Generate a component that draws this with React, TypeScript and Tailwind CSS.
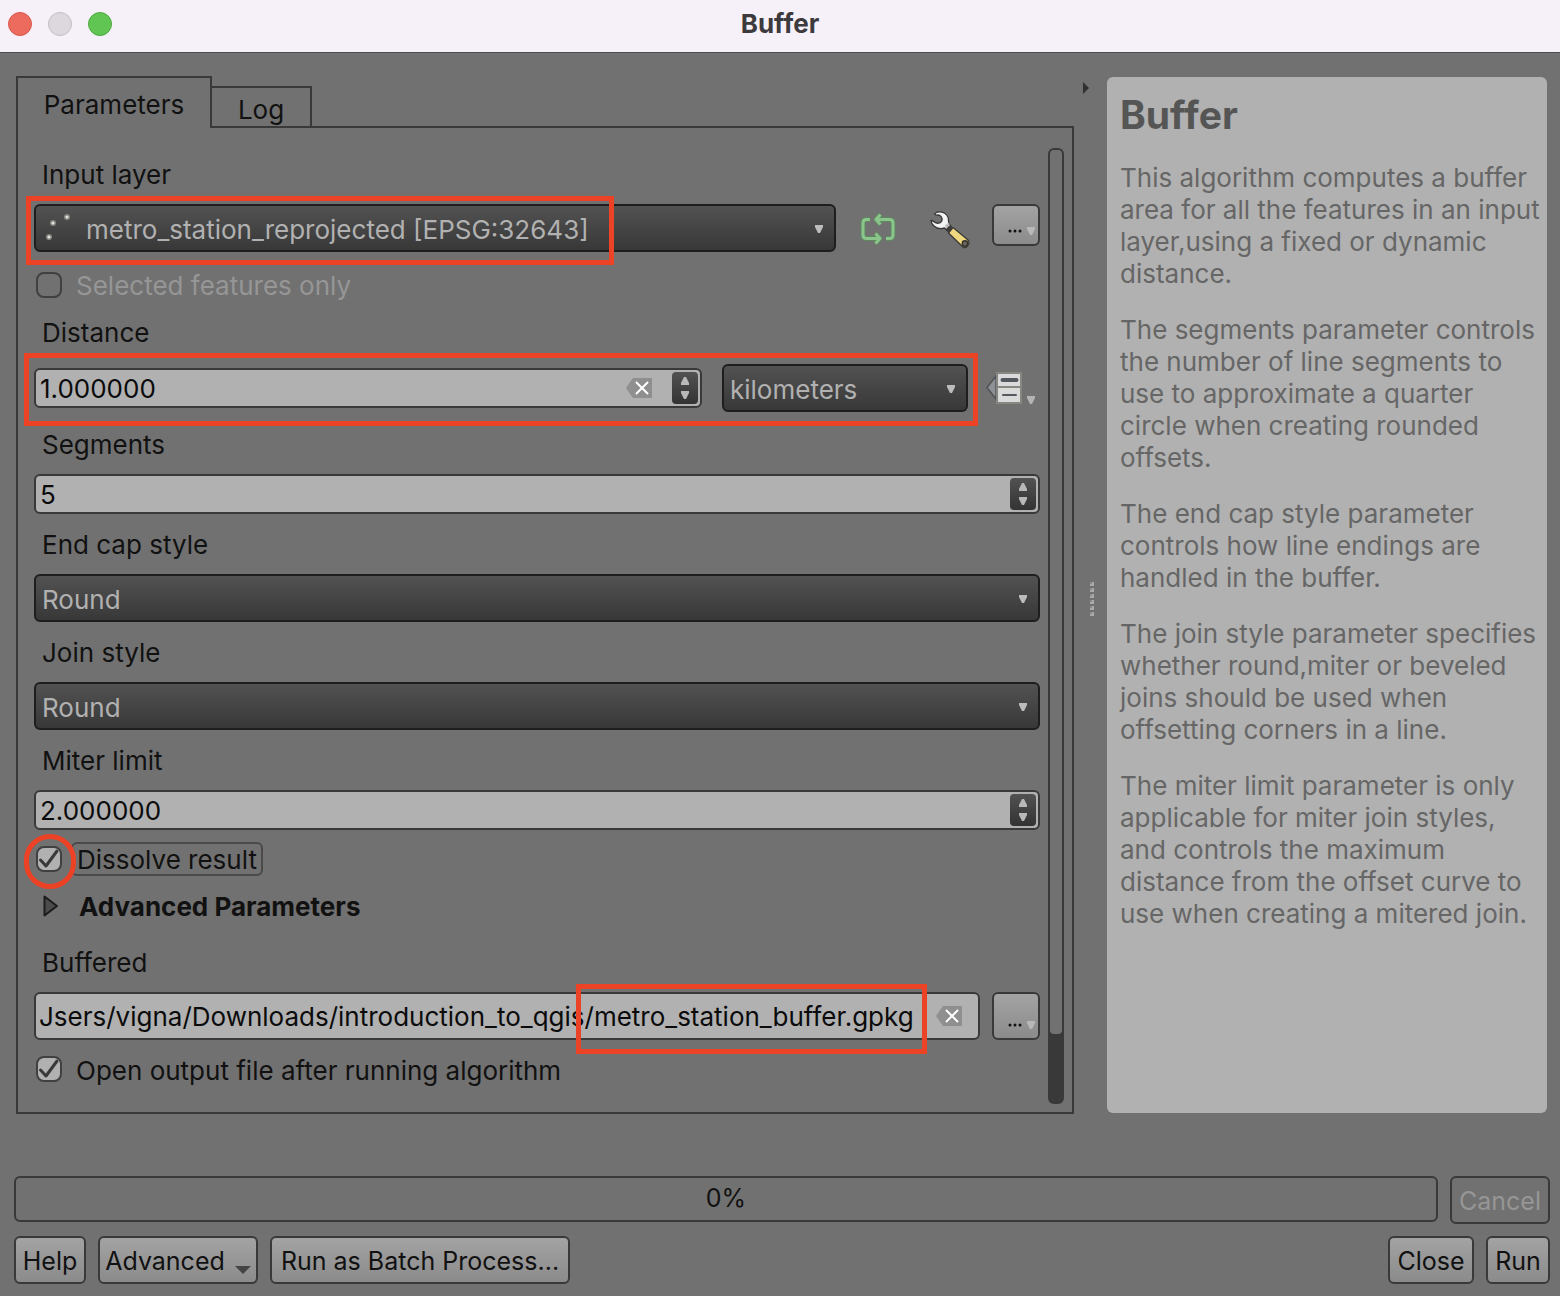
import React, { useState } from "react";

const DARK = "border-2 border-[#1e1e1e] bg-linear-to-b from-[#525252] to-[#383838] text-[#b1b1b1]";
const LIGHT = "border-2 border-[#393939] bg-linear-to-b from-[#a3a3a3] to-[#8b8b8b] text-[#111111]";

function Down({ className = "" }: { className?: string }) {
  return (
    <svg aria-hidden="true" viewBox="0 0 8 8" className={"h-2 w-2 " + className} fill="currentColor">
      <path d="M0 0h8v2L5 8H3L0 2z" />
    </svg>
  );
}

function Mark({ className }: { className: string }) {
  return <span aria-hidden="true" className={"pointer-events-none absolute z-10 border-5 border-[#ec4226] " + className} />;
}

function FieldLabel({ id, children, className = "mt-[15px]" }: { id: string; children: string; className?: string }) {
  return (
    <label htmlFor={id} className={"mb-[13px] block self-start pl-2 leading-8 " + className}>
      {children}
    </label>
  );
}

function Combo({ id, options, label, className = "" }: { id: string; options: string[]; label?: string; className?: string }) {
  return (
    <div className={"relative " + className}>
      <select id={id} aria-label={label} className={"h-12 w-full appearance-none rounded-md pt-0.5 pr-8 pl-1.5 " + DARK}>
        {options.map((o) => (
          <option key={o}>{o}</option>
        ))}
      </select>
      <Down className="pointer-events-none absolute top-[21px] right-[13px] text-[#bcbcbc]" />
    </div>
  );
}

function ClearButton({ onClick, label }: { onClick: () => void; label: string }) {
  return (
    <button type="button" aria-label={label} onClick={onClick} className="shrink-0">
      <svg viewBox="0 0 26 20" className="h-5 w-[26px]">
        <path d="M0 10 7 0h19v20H7z" fill="#8f8f8f" />
        <path d="m10 4 12 12M22 4 10 16" stroke="#fff" strokeWidth="2" />
      </svg>
    </button>
  );
}

function Spin({ id, initial, clear = false, className = "" }: { id: string; initial: string; clear?: boolean; className?: string }) {
  const [value, setValue] = useState(initial);
  const digits = (initial.split(".")[1] || "").length;
  const step = (d: number) => setValue((v) => ((parseFloat(v) || 0) + d).toFixed(digits));
  return (
    <div className={"flex h-10 items-center rounded-md border-2 border-[#393939] bg-[#b1b1b1] pr-0.5 " + className}>
      <input
        id={id}
        inputMode="decimal"
        value={value}
        onChange={(e) => setValue(e.target.value)}
        className="h-full min-w-0 flex-1 bg-transparent pl-1 leading-9 text-[#0b0b0b] outline-none"
      />
      {clear && <ClearButton label="Clear distance" onClick={() => setValue("")} />}
      <div className={"flex h-8 w-[26px] flex-col rounded bg-linear-to-b from-[#525252] to-[#333333] text-[#b8b8b8] " + (clear ? "ml-5" : "ml-2")}>
        <button type="button" aria-label="Increase" onClick={() => step(1)} className="flex flex-1 items-end justify-center pb-[3px]">
          <Down className="rotate-180" />
        </button>
        <button type="button" aria-label="Decrease" onClick={() => step(-1)} className="flex flex-1 items-start justify-center pt-[3px]">
          <Down />
        </button>
      </div>
    </div>
  );
}

function Check({ id, checked = false, disabled = false }: { id: string; checked?: boolean; disabled?: boolean }) {
  return (
    <span className="relative ml-0.5 flex h-[26px] w-[26px] shrink-0">
      <input
        id={id}
        type="checkbox"
        defaultChecked={checked}
        disabled={disabled}
        className="peer h-full w-full appearance-none rounded-lg border-2 border-[#404040] bg-[#b1b1b1] disabled:bg-transparent"
      />
      <svg aria-hidden="true" viewBox="0 0 26 26" className="pointer-events-none absolute inset-0 hidden peer-checked:block" fill="none">
        <path d="M4.500 14 10 20 21 5" stroke="#393939" strokeWidth="3" strokeLinecap="round" strokeLinejoin="round" />
      </svg>
    </span>
  );
}

function MoreButton({ label, className }: { label: string; className: string }) {
  return (
    <button type="button" aria-label={label} className={"relative w-12 shrink-0 rounded-md " + LIGHT + " " + className}>
      <svg aria-hidden="true" viewBox="0 0 14 4" className="absolute bottom-[11px] left-3.5 h-1 w-3.5" fill="#111">
        <circle cx="2" cy="2" r="1.500" />
        <circle cx="7" cy="2" r="1.500" />
        <circle cx="12" cy="2" r="1.500" />
      </svg>
      <Down className="absolute right-[3px] bottom-[9px] text-[#b8b8b8]" />
    </button>
  );
}

function SwapIcon() {
  return (
    <svg viewBox="0 0 36 34" className="h-[34px] w-9" fill="none" strokeLinejoin="round">
      <g stroke="#4f9a52" strokeOpacity="0.55" strokeWidth="5">
        <path d="M10 7.500H6.500Q3 7.500 3 11V23Q3 26.500 6.500 26.500H20M26 26.500H29.500Q33 26.500 33 23V11Q33 7.500 29.500 7.500H17" />
        <path d="M20.500 2.500 16 7.500 20.500 12.500M15.500 21.500l4.500 5-4.500 5" />
      </g>
      <g stroke="#8cc58c" strokeWidth="3">
        <path d="M10 7.500H6.500Q3 7.500 3 11V23Q3 26.500 6.500 26.500H20M26 26.500H29.500Q33 26.500 33 23V11Q33 7.500 29.500 7.500H17" />
        <path d="M20.500 2.500 16 7.500 20.500 12.500M15.500 21.500l4.500 5-4.500 5" />
      </g>
    </svg>
  );
}

function WrenchIcon() {
  return (
    <svg viewBox="0 0 40 38" className="h-[38px] w-10" strokeLinejoin="round">
      <path
        d="M4.500 3C6 .8 9 .6 12 1.200c4 1 6.500 4.500 6.500 8.300 0 1.500 0 2.500.5 3.500l2 2-4 4.500-2.500-2.500c-4 1-8 .5-10.500-2C2 13.200 1 11.500 1 9.500l2 .5c1.500 1.500 3.500 2.500 5.500 2.200C11 11.800 12.500 10 12 7.500 11.500 5 9 3.500 6.500 4.200z"
        fill="#f4f4f4"
        stroke="#383838"
        strokeWidth="1.300"
      />
      <path d="m15 14.500 3.500-3 1.500 3-3.500 3.500z" fill="#bdbdbd" />
      <path d="m19.500 14.500 3 2-4.500 5-2.500-3z" fill="#3c3c3c" />
      <path d="m23 16.500 15 12.500c2.500 2.500-1 8.500-4.500 7.500L18.500 22z" fill="#efd880" stroke="#3a3a36" strokeWidth="1.300" />
      <circle cx="35" cy="32.500" r="2.700" fill="#6c6a60" stroke="#33332b" strokeWidth="1.500" />
    </svg>
  );
}

function OverrideIcon() {
  return (
    <svg viewBox="0 0 36 32" className="h-8 w-9">
      <path d="M10 4 1 15.500 10 27z" fill="#8f9197" stroke="#505358" strokeWidth="1.500" />
      <path d="M10 0h26v32H10z" fill="#878782" />
      <path d="M12 2h22v12H12zM12 16h22v14H12z" fill="#dadada" />
      <path d="M16.500 8h14" stroke="#54575e" strokeWidth="4" strokeLinecap="round" />
      <path d="M17 23h13" stroke="#54575e" strokeWidth="2" strokeLinecap="round" />
    </svg>
  );
}

const HELP = [
  "This algorithm computes a buffer\narea for all the features in an input\nlayer,using a fixed or dynamic\ndistance.",
  "The segments parameter controls\nthe number of line segments to\nuse to approximate a quarter\ncircle when creating rounded\noffsets.",
  "The end cap style parameter\ncontrols how line endings are\nhandled in the buffer.",
  "The join style parameter specifies\nwhether round,miter or beveled\njoins should be used when\noffsetting corners in a line.",
  "The miter limit parameter is only\napplicable for miter join styles,\nand controls the maximum\ndistance from the offset curve to\nuse when creating a mitered join.",
];

function PushButton({ children, className = "" }: { children: React.ReactNode; className?: string }) {
  return (
    <button type="button" className={"flex h-12 items-center justify-center rounded-md pt-1 whitespace-nowrap " + LIGHT + " " + className}>
      {children}
    </button>
  );
}

export default function App() {
  const [tab, setTab] = useState("Parameters");
  const [path, setPath] = useState("Jsers/vigna/Downloads/introduction_to_qgis/metro_station_buffer.gpkg");
  return (
    <div className="flex min-h-screen flex-col bg-[#717171] font-['Inter',sans-serif] text-[26px] text-[#111111]">
      <header className="relative flex h-[53px] items-center justify-center border-b border-[#4c4c4c] bg-[#f6f1f8] pb-1.5">
        <div className="absolute top-3 left-2 flex gap-4">
          <button type="button" aria-label="Close window" className="h-6 w-6 rounded-full border border-[#d9564a] bg-[#ed6a5e]" />
          <button type="button" aria-label="Minimize window" className="h-6 w-6 rounded-full border border-[#c2bec4] bg-[#dcd8de]" />
          <button type="button" aria-label="Zoom window" className="h-6 w-6 rounded-full border border-[#4fa93f] bg-[#61c554]" />
        </div>
        <h1 className="font-bold text-[#3d3a3e]">Buffer</h1>
      </header>

      <main className="flex flex-1 pt-[23px] pr-[13px] pl-4">
        <section className="flex min-w-0 flex-1 flex-col">
          <div role="tablist" className="flex h-[50px]">
            <button
              type="button"
              role="tab"
              aria-selected={tab === "Parameters"}
              onClick={() => setTab("Parameters")}
              className="relative h-[52px] w-[196px] border-2 border-b-0 border-[#393939] bg-[#717171] pt-0.5"
            >
              Parameters
            </button>
            <button
              type="button"
              role="tab"
              aria-selected={tab === "Log"}
              onClick={() => setTab("Log")}
              className="mt-2.5 -ml-0.5 w-[102px] border-2 border-b-0 border-[#393939] pt-0.5"
            >
              Log
            </button>
          </div>

          <div className="flex flex-1 gap-2 border-2 border-[#393939] pt-5 pr-2 pb-2 pl-4">
            <form className="flex min-w-0 flex-1 flex-col" onSubmit={(e) => e.preventDefault()}>
              <FieldLabel id="layer" className="mt-[11px]">
                Input layer
              </FieldLabel>
              <div className="flex items-start">
                <div className="relative min-w-0 flex-1">
                  <select id="layer" className={"h-12 w-full appearance-none rounded-md pt-0.5 pr-8 pl-[50px] " + DARK}>
                    <option>metro_station_reprojected [EPSG:32643]</option>
                  </select>
                  <svg aria-hidden="true" viewBox="0 0 28 28" className="pointer-events-none absolute top-[9px] left-[10px] h-7 w-7">
                    <g fill="#e4e4e0" stroke="#85857f" strokeWidth="1.500">
                      <circle cx="23" cy="4" r="2.300" />
                      <circle cx="9" cy="10" r="2.300" />
                      <circle cx="5" cy="24" r="2.300" />
                    </g>
                  </svg>
                  <Down className="pointer-events-none absolute top-[21px] right-[13px] text-[#bcbcbc]" />
                  <Mark className="-top-2 -left-2 h-[69px] w-[588px]" />
                </div>
                <button type="button" aria-label="Iterate over this layer" className="mt-2 ml-6 shrink-0">
                  <SwapIcon />
                </button>
                <button type="button" aria-label="Advanced options" className="mt-[7px] ml-[34px] shrink-0">
                  <WrenchIcon />
                </button>
                <MoreButton label="Browse input layer" className="ml-[22px] h-[42px]" />
              </div>

              <div className="mt-[17px] flex h-8 items-center gap-3.5 text-[#969696]">
                <Check id="selected" disabled />
                <label htmlFor="selected">Selected features only</label>
              </div>

              <FieldLabel id="distance" className="mt-4">
                Distance
              </FieldLabel>
              <div className="my-0.5 flex items-center gap-[18px]">
                <div className="relative flex min-w-0 flex-1 items-center gap-5">
                  <Spin id="distance" initial="1.000000" clear className="min-w-0 flex-1" />
                  <Combo id="units" label="Distance units" options={["kilometers", "meters", "miles"]} className="w-[246px]" />
                  <Mark className="-top-[11px] -right-2.5 -bottom-3.5 -left-2.5" />
                </div>
                <button type="button" aria-label="Data defined override" className="flex w-[54px] items-end gap-[5px] text-[#b4b4b4]">
                  <OverrideIcon />
                  <Down />
                </button>
              </div>

              <FieldLabel id="segments">Segments</FieldLabel>
              <Spin id="segments" initial="5" />
              <FieldLabel id="cap">End cap style</FieldLabel>
              <Combo id="cap" options={["Round", "Flat", "Square"]} />
              <FieldLabel id="join">Join style</FieldLabel>
              <Combo id="join" options={["Round", "Miter", "Bevel"]} />
              <FieldLabel id="miter">Miter limit</FieldLabel>
              <Spin id="miter" initial="2.000000" />

              <div className="relative mt-3 flex h-[34px] items-center gap-[9px]">
                <Check id="dissolve" checked />
                <label htmlFor="dissolve" className="flex h-[34px] items-center rounded-md border-2 border-[#4a4a4a] px-1">
                  Dissolve result
                </label>
                <Mark className="-top-2 -left-2.5 h-[55px] w-[52px] rounded-full" />
              </div>

              <button type="button" aria-expanded="false" className="mt-3.5 flex h-8 items-center gap-5 self-start pl-[9px] font-bold">
                <svg aria-hidden="true" viewBox="0 0 16 22" className="h-[22px] w-4">
                  <path d="M1.500 1.500 14 11 1.500 20.500z" fill="#4c4c4c" stroke="#1c1c1c" strokeWidth="2" strokeLinejoin="round" />
                </svg>
                <span>Advanced Parameters</span>
              </button>

              <FieldLabel id="output" className="mt-[25px]">
                Buffered
              </FieldLabel>
              <div className="flex gap-3">
                <div className="relative flex h-12 min-w-0 flex-1 items-center rounded-md border-2 border-[#393939] bg-[#b1b1b1] pr-4">
                  <input
                    id="output"
                    value={path}
                    onChange={(e) => setPath(e.target.value)}
                    className="mr-2 h-full min-w-0 flex-1 bg-transparent pl-[3px] text-[#0b0b0b] outline-none"
                  />
                  <ClearButton label="Clear output path" onClick={() => setPath("")} />
                  <Mark className="-top-2.5 right-[51px] -bottom-4 w-[351px]" />
                </div>
                <MoreButton label="Browse output" className="h-12" />
              </div>

              <div className="mt-[13px] flex h-8 items-center gap-3.5">
                <Check id="open" checked />
                <label htmlFor="open" className="pt-0.5">
                  Open output file after running algorithm
                </label>
              </div>
            </form>

            <div aria-hidden="true" className="flex w-4 flex-col rounded-md bg-[#393939] p-0.5">
              <div className="grow-[13] rounded-sm bg-[#717171]" />
              <div className="grow" />
            </div>
          </div>
        </section>

        <div className="flex w-[33px] shrink-0 flex-col pt-1.5 pb-2.5 pl-[9px]">
          <button type="button" aria-label="Collapse help" className="h-3 w-2">
            <svg viewBox="0 0 6 12" className="h-3 w-1.5">
              <path d="M0 0l6 6-6 6z" fill="#303030" />
            </svg>
          </button>
          <div className="flex flex-1 flex-col justify-center gap-0.5 pl-[7px]">
            {[0, 1, 2, 3, 4, 5].map((i) => (
              <span key={i} className="h-1 w-1 border-r-2 border-b-2 border-[#a9a9a9] bg-[#8c8c8c]" />
            ))}
          </div>
        </div>

        <aside className="my-px w-[440px] shrink-0 rounded-md bg-[#b1b1b1] px-[13px] pt-3.5 text-[#666666]">
          <h2 className="mb-[23px] text-[39px] leading-12 font-bold text-[#555555]">Buffer</h2>
          <div className="flex flex-col gap-6 leading-8 whitespace-pre">
            {HELP.map((p) => (
              <p key={p}>{p}</p>
            ))}
          </div>
        </aside>
      </main>

      <footer className="mt-[62px] flex flex-col gap-3 pr-2.5 pb-3 pl-3.5 text-[25px]">
        <div className="flex items-start gap-3">
          <div
            role="progressbar"
            aria-label="Progress"
            aria-valuenow={0}
            aria-valuemin={0}
            aria-valuemax={100}
            className="flex h-[46px] flex-1 items-center justify-center rounded-md border-2 border-[#393939]"
          >
            0%
          </div>
          <button type="button" disabled className="h-12 w-[100px] rounded-md border-2 border-[#393939] pt-1 text-[#969696]">
            Cancel
          </button>
        </div>
        <div className="flex gap-3">
          <PushButton className="w-[72px]">Help</PushButton>
          <PushButton className="w-[160px] gap-2.5">
            Advanced
            <svg aria-hidden="true" viewBox="0 0 16 8" className="mt-4 h-2 w-4">
              <path d="M0 0h16L8 8z" fill="#444" />
            </svg>
          </PushButton>
          <PushButton className="w-[300px]">Run as Batch Process...</PushButton>
          <PushButton className="ml-auto w-[86px]">Close</PushButton>
          <PushButton className="w-16">Run</PushButton>
        </div>
      </footer>
    </div>
  );
}
